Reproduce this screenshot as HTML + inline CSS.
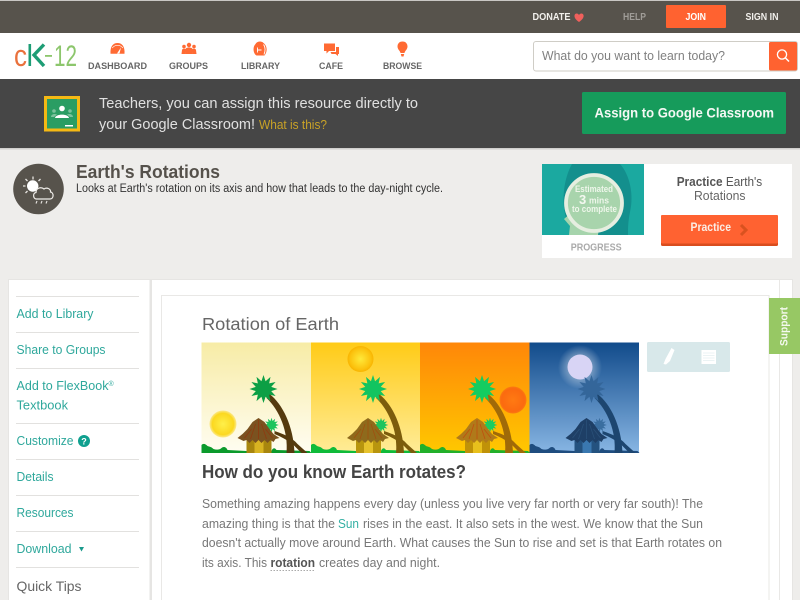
<!DOCTYPE html>
<html><head><meta charset="utf-8"><title>Earth's Rotations</title>
<style>
html,body{margin:0;padding:0;width:800px;height:600px;overflow:hidden;background:#eeedeb}
svg{display:block;position:absolute;left:0;top:0;filter:blur(.3px)}
text{font-family:"Liberation Sans",sans-serif}
.nav{font-size:9.5px;font-weight:bold;fill:#666}
.top{font-size:9.8px;font-weight:bold}
.side{font-size:12.5px;fill:#2fa89c}
.p{font-size:13px;fill:#777}
</style></head><body>
<svg width="800" height="600" viewBox="0 0 800 600" xmlns="http://www.w3.org/2000/svg">
<defs>
<linearGradient id="g1" x1="0" y1="0" x2="0" y2="1"><stop offset="0" stop-color="#f7eca6"/><stop offset="1" stop-color="#fffdf2"/></linearGradient>
<linearGradient id="g2" x1="0" y1="0" x2="0" y2="1"><stop offset="0" stop-color="#ffcb17"/><stop offset="1" stop-color="#ffec98"/></linearGradient>
<linearGradient id="g3" x1="0" y1="0" x2="0" y2="1"><stop offset="0" stop-color="#ff8708"/><stop offset="1" stop-color="#ffc800"/></linearGradient>
<linearGradient id="g4" x1="0" y1="0" x2="0" y2="1"><stop offset="0" stop-color="#114b8b"/><stop offset="1" stop-color="#88b6e4"/></linearGradient>
<radialGradient id="s1"><stop offset="0" stop-color="#fff04a"/><stop offset=".8" stop-color="#fbd820"/><stop offset="1" stop-color="#fbe264" stop-opacity=".7"/></radialGradient>
<radialGradient id="s2"><stop offset="0" stop-color="#ffe93a"/><stop offset=".8" stop-color="#fcc20e"/><stop offset="1" stop-color="#f8b400"/></radialGradient>
<radialGradient id="s3"><stop offset="0" stop-color="#ff7a12"/><stop offset=".85" stop-color="#fb6a10"/><stop offset="1" stop-color="#fb7a10"/></radialGradient>
<radialGradient id="halo"><stop offset=".45" stop-color="#fff" stop-opacity=".4"/><stop offset="1" stop-color="#fff" stop-opacity="0"/></radialGradient>
<polygon id="star" points="0,-14 2.07,-7.73 7,-12.1 5.66,-5.66 12.1,-7 7.73,-2.07 14,0 7.73,2.07 12.1,7 5.66,5.66 7,12.1 2.07,7.73 0,14 -2.07,7.73 -7,12.1 -5.66,5.66 -12.1,7 -7.73,2.07 -14,0 -7.73,-2.07 -12.1,-7 -5.66,-5.66 -7,-12.1 -2.07,-7.73"/>
<g id="scene">
<path d="M0 109V101C2 99 4 100 6 102 9 103 10 103 12 105 15 106 18 106 20 104 22 102 25 103 26 106L45 107 70 107C71 104 73 103 75 106L108 107 110 109Z" fill="var(--gr)"/>
<use href="#star" transform="translate(70 81) scale(.52)" fill="var(--st2)"/>
<path d="M73 87C82 90 90 93 96 100L106 109 100 109 92 101C86 96 80 93 73 90Z" fill="var(--tr)"/>
<path d="M68 50C81 60 92 82 93 109L85 109C87 88 78 66 65 54Z" fill="var(--tr)"/>
<use href="#star" transform="translate(62 45)" fill="var(--st)"/>
<rect x="45" y="92" width="25" height="17" fill="var(--wl)"/>
<rect x="53" y="96" width="9" height="13" fill="var(--dr)"/>
<path d="M57 74L63 78 68 85 72 90 78 94 74 95 72 98 69 96 66 99 63 96 60 99 57 96 54 99 51 96 48 99 45 96 42 97 36 94 41 90 46 85 51 78Z" fill="var(--rf)"/>
<path d="M57 76V95M54 80L49 95M60 80L65 95M50 85L43 94M64 85L71 94" stroke="var(--rs)" stroke-width=".8" fill="none"/>
</g>
</defs>

<!-- top bar -->
<rect width="800" height="33" fill="#57534c"/>
<rect width="800" height="1" fill="#c9c7c4"/>
<text class="top" x="532.500" y="20" fill="#f2f0ec" textLength="38" lengthAdjust="spacingAndGlyphs">DONATE</text>
<path d="M579 22C575.500 19.500 574.300 17.500 574.500 15.500 574.800 13.200 577.800 12.700 579 15 580.200 12.700 583.300 13.200 583.600 15.500 583.800 17.500 582.500 19.500 579 22Z" fill="#f0605c"/>
<text class="top" x="623" y="20" fill="#a09d98" textLength="23" lengthAdjust="spacingAndGlyphs">HELP</text>
<rect x="666" y="5" width="60" height="23" rx="1" fill="#ff6230"/>
<text class="top" x="685.500" y="20" fill="#fff" textLength="20.500" lengthAdjust="spacingAndGlyphs">JOIN</text>
<text class="top" x="745.500" y="20" fill="#f2f0ec" textLength="33" lengthAdjust="spacingAndGlyphs">SIGN IN</text>

<!-- nav -->
<rect y="33" width="800" height="46" fill="#fff"/>
<text x="14" y="66" font-size="31" fill="#e9713c" textLength="13" lengthAdjust="spacingAndGlyphs">c</text>
<path d="M29.800 44V66" fill="none" stroke="#1d9d75" stroke-width="2.600"/>
<path d="M44 44.500L34 55 44 66" fill="none" stroke="#1d9d75" stroke-width="3.400"/>
<rect x="45" y="55" width="7" height="1.800" fill="#8cc66c"/>
<text x="54" y="66" font-size="30" fill="#8cc66c" textLength="23" lengthAdjust="spacingAndGlyphs">12</text>
<!-- dashboard -->
<path d="M110.500 53.800C110 46.500 113 43 117.500 43 122 43 125 46.500 124.500 53.800Z" fill="#ff6a33"/>
<path d="M117 53.500L121 47.500 119.500 53.500Z" fill="#fff"/>
<path d="M112.300 48A6.500 6.500 0 0 1 122.800 48" fill="none" stroke="#fff" stroke-width=".7"/>
<!-- groups -->
<g fill="#ff6a33"><circle cx="189" cy="45" r="2.200"/><path d="M185 54L185.500 49C186 47 192 47 192.500 49L193 54Z"/><circle cx="184" cy="46.500" r="1.800"/><path d="M181.500 54L182 50C182.500 48 185.500 48 186 50L185 54Z"/><circle cx="194" cy="46.500" r="1.800"/><path d="M196.500 54L196 50C195.500 48 192.500 48 192 50L193 54Z"/></g>
<!-- library -->
<path d="M256.500 55.500C253 53.500 252.500 47 255.500 44 257 41.500 261 40.500 263.500 43 267.500 46 267.500 52 264.500 55.500Z" fill="#ff6a33"/>
<path d="M257 50H261.500M257.500 47.500V52.500M263.500 44.500C265.500 47 265.500 51 264 54.500" fill="none" stroke="#fff" stroke-width=".9"/>
<!-- cafe -->
<path d="M324 43.500H335V51H329L326.500 53.500V51H324Z" fill="#ff6a33"/>
<path d="M336 47H339V54H338V56L335.500 54H331.500L330.500 52H336Z" fill="#ff6a33"/>
<!-- browse -->
<path d="M402.500 41.500C406 41.500 407.500 44 407.500 46.500 407.500 49.500 405 50.500 404.500 53H400.500C400 50.500 397.500 49.500 397.500 46.500 397.500 44 399 41.500 402.500 41.500Z" fill="#ff6a33"/>
<path d="M400.800 54H404.200L403.500 56.500H401.500Z" fill="#ff6a33"/>
<text class="nav" x="88" y="69" textLength="59" lengthAdjust="spacingAndGlyphs">DASHBOARD</text>
<text class="nav" x="169" y="69" textLength="39" lengthAdjust="spacingAndGlyphs">GROUPS</text>
<text class="nav" x="241" y="69" textLength="39" lengthAdjust="spacingAndGlyphs">LIBRARY</text>
<text class="nav" x="319" y="69" textLength="24" lengthAdjust="spacingAndGlyphs">CAFE</text>
<text class="nav" x="383" y="69" textLength="39" lengthAdjust="spacingAndGlyphs">BROWSE</text>

<!-- search -->
<rect x="533.500" y="41.500" width="264" height="29.500" rx="2.500" fill="#fff" stroke="#cfcdc6"/>
<rect x="769" y="42" width="28" height="28.500" rx="1.500" fill="#ff6230"/>
<circle cx="782" cy="54.500" r="4.600" fill="none" stroke="#fff" stroke-width="1.300"/>
<path d="M785.500 58L789 61.500" stroke="#fff" stroke-width="1.500"/>
<text x="542" y="60" font-size="13" fill="#808080" textLength="183" lengthAdjust="spacingAndGlyphs">What do you want to learn today?</text>

<!-- classroom banner -->
<rect y="79" width="800" height="69" fill="#464646"/>
<rect y="148" width="800" height="1.500" fill="#d0cfcd"/>
<rect x="44" y="96" width="36" height="35.500" fill="#f5b914"/>
<rect x="47" y="99" width="30" height="29.500" fill="#2a9d63"/>
<g fill="#fff"><circle cx="62" cy="108.500" r="2.800"/><path d="M55 118C55.500 113.500 68.500 113.500 69 118Z"/><rect x="65" y="125" width="8" height="1.500"/></g>
<g fill="#7cc29c"><circle cx="54" cy="111" r="1.800"/><circle cx="70" cy="111" r="1.800"/><path d="M51 117C51 114 55 113.500 57 114.500L54 117ZM73 117C73 114 69 113.500 67 114.500L70 117Z"/></g>
<text x="99" y="108" font-size="14.500" fill="#e0e0e0" textLength="319" lengthAdjust="spacingAndGlyphs">Teachers, you can assign this resource directly to</text>
<text x="99" y="129" font-size="14.500" fill="#e0e0e0" textLength="156" lengthAdjust="spacingAndGlyphs">your Google Classroom!</text>
<text x="259" y="129" font-size="12.500" fill="#c9a227" textLength="68" lengthAdjust="spacingAndGlyphs">What is this?</text>
<rect x="582" y="92" width="204" height="42" rx="1.500" fill="#169b5b"/>
<text x="594.500" y="117.500" font-size="13.800" font-weight="bold" fill="#f4f8f4" textLength="179.500" lengthAdjust="spacingAndGlyphs">Assign to Google Classroom</text>

<!-- title -->
<circle cx="38.500" cy="189" r="25.300" fill="#57534c"/>
<circle cx="32.700" cy="186" r="5.700" fill="#fff"/>
<path d="M33 176.500V179.500M25.500 179L27.500 181M40.500 179L38.500 181M23 186H25.500M25.500 193L27.500 191" stroke="#e6e4e0" stroke-width="1.300" fill="none"/>
<path d="M36.500 199C33 199 32.500 193 36 192.500 36 188 41 186.500 44 189 47 187 51 189 50.500 192 54 192.500 54 199 50 199Z" fill="#57534c" stroke="#f0eeea" stroke-width="1.200"/>
<path d="M36 203.500L37 201M41 203.500L42 201M46 203.500L47 201" stroke="#e6e4e0" stroke-width="1.100"/>
<text x="76" y="178" font-size="18" font-weight="bold" fill="#55514b" textLength="144" lengthAdjust="spacingAndGlyphs">Earth's Rotations</text>
<text x="76" y="192" font-size="11.500" fill="#333" textLength="367" lengthAdjust="spacingAndGlyphs">Looks at Earth's rotation on its axis and how that leads to the day-night cycle.</text>

<!-- practice card -->
<rect x="542" y="164" width="250" height="94" fill="#fff"/>
<rect x="542" y="164" width="102" height="71" fill="#1ba9a0"/>
<path d="M566 218C561 200 564 178 572 164H620C630 175 634 195 630 212 628 222 628 228 628 235H597L566 218Z" fill="#138f8d"/>
<path d="M569 235L570 226 564 219 572 212 600 222 598 235Z" fill="#a6d4ac"/>
<circle cx="594" cy="203" r="28" fill="#a8d4ac" stroke="#e6eee0" stroke-width="3.800"/>
<text x="575" y="192" font-size="9" font-weight="bold" fill="#eef6ea" textLength="38" lengthAdjust="spacingAndGlyphs">Estimated</text>
<text x="579" y="204" font-size="13" font-weight="bold" fill="#f4f8f0">3</text>
<text x="589" y="203.500" font-size="9.500" font-weight="bold" fill="#eef6ea" textLength="20" lengthAdjust="spacingAndGlyphs">mins</text>
<text x="572" y="212" font-size="9" font-weight="bold" fill="#eef6ea" textLength="45" lengthAdjust="spacingAndGlyphs">to complete</text>
<text x="570.700" y="250.500" font-size="10.500" font-weight="bold" fill="#aaa" textLength="51" lengthAdjust="spacingAndGlyphs">PROGRESS</text>
<text x="676.700" y="186" font-size="13" fill="#555" textLength="85.500" lengthAdjust="spacingAndGlyphs"><tspan font-weight="bold">Practice</tspan> Earth's</text>
<text x="694" y="200" font-size="13" fill="#666" textLength="51.500" lengthAdjust="spacingAndGlyphs">Rotations</text>
<rect x="661" y="215" width="117" height="31" rx="1.500" fill="#d94d1e"/>
<rect x="661" y="215" width="117" height="28.500" rx="1.500" fill="#ff6231"/>
<text x="690.500" y="231" font-size="12" font-weight="bold" fill="#fbeee6" textLength="40.500" lengthAdjust="spacingAndGlyphs">Practice</text>
<path d="M741 225L746 230 741 235" fill="none" stroke="#d9521f" stroke-width="3"/>

<!-- panels -->
<rect x="8" y="279" width="785" height="321" fill="#e6e5e3"/>
<rect x="9" y="280" width="140.500" height="320" fill="#fff"/>
<rect x="152" y="280" width="640" height="320" fill="#fff"/>
<rect x="161.500" y="295.500" width="607.500" height="310" fill="#fff" stroke="#e9e8e6"/>
<rect x="779" y="280" width="1" height="320" fill="#e9e8e6"/>

<!-- sidebar -->
<g fill="#e2e1df">
<rect x="16" y="296" width="123" height="1"/><rect x="16" y="332" width="123" height="1"/><rect x="16" y="368" width="123" height="1"/><rect x="16" y="423" width="123" height="1"/><rect x="16" y="459" width="123" height="1"/><rect x="16" y="495" width="123" height="1"/><rect x="16" y="531" width="123" height="1"/><rect x="16" y="567" width="123" height="1"/>
</g>
<text class="side" x="16.500" y="318" textLength="77" lengthAdjust="spacingAndGlyphs">Add to Library</text>
<text class="side" x="16.500" y="354" textLength="89" lengthAdjust="spacingAndGlyphs">Share to Groups</text>
<text class="side" x="16.500" y="390" textLength="92" lengthAdjust="spacingAndGlyphs">Add to FlexBook</text>
<text x="108.500" y="386" font-size="7" fill="#2fa89c">®</text>
<text class="side" x="16.500" y="409.500" textLength="51.500" lengthAdjust="spacingAndGlyphs">Textbook</text>
<text class="side" x="16.500" y="445" textLength="57" lengthAdjust="spacingAndGlyphs">Customize</text>
<circle cx="84" cy="441" r="6" fill="#0fa08f"/>
<text x="84" y="444.500" font-size="9" font-weight="bold" fill="#fff" text-anchor="middle">?</text>
<text class="side" x="16.500" y="481" textLength="37" lengthAdjust="spacingAndGlyphs">Details</text>
<text class="side" x="16.500" y="517" textLength="57" lengthAdjust="spacingAndGlyphs">Resources</text>
<text class="side" x="16.500" y="553" textLength="55" lengthAdjust="spacingAndGlyphs">Download</text>
<path d="M79 547H84L81.500 551.500Z" fill="#1a9a8c"/>
<text x="16.500" y="591" font-size="14" fill="#666" textLength="65" lengthAdjust="spacingAndGlyphs">Quick Tips</text>

<!-- article -->
<text x="202" y="330" font-size="17.500" fill="#666" textLength="137" lengthAdjust="spacingAndGlyphs">Rotation of Earth</text>

<!-- image -->
<rect x="201.500" y="342.500" width="110" height="110.500" fill="url(#g1)"/>
<rect x="311" y="342.500" width="110" height="110.500" fill="url(#g2)"/>
<rect x="420" y="342.500" width="110" height="110.500" fill="url(#g3)"/>
<rect x="529.500" y="342.500" width="109.500" height="110.500" fill="url(#g4)"/>
<circle cx="223" cy="424" r="13.500" fill="url(#s1)"/>
<circle cx="360.500" cy="359" r="13" fill="url(#s2)"/>
<circle cx="513" cy="400" r="13.500" fill="url(#s3)"/>
<circle cx="580" cy="367" r="22" fill="url(#halo)"/>
<circle cx="580" cy="367" r="12.500" fill="#d8d4f5"/>
<g transform="translate(201.500 344)" style="--gr:#0b9a2c;--st:#0c9f45;--st2:#1dc45e;--tr:#553a0e;--wl:#a8860e;--dr:#d8b422;--rf:#7a5220;--rs:#8f3a10"><use href="#scene"/></g>
<g transform="translate(311 344)" style="--gr:#0fbb3a;--st:#12c460;--st2:#1dc45e;--tr:#7c5c0c;--wl:#b8950e;--dr:#e6c22c;--rf:#8e6a1c;--rs:#a0500f"><use href="#scene"/></g>
<g transform="translate(420 344)" style="--gr:#22b02a;--st:#14cc60;--st2:#1dcc60;--tr:#a06a08;--wl:#c09208;--dr:#e8c01c;--rf:#b07a1a;--rs:#c0500f"><use href="#scene"/></g>
<g transform="translate(529.500 344)" style="--gr:#1f4d7f;--st:#34669a;--st2:#3a6ea0;--tr:#1d4670;--wl:#24527f;--dr:#3a78b0;--rf:#1e3f66;--rs:#2a5078"><use href="#scene"/></g>

<!-- tools -->
<rect x="647" y="342" width="83" height="30" rx="1.500" fill="#d8e8ea"/>
<path d="M671.500 348L674.500 350 670 361 666 364.500 663.500 364 665.500 359Z" fill="#fff"/>
<rect x="701.500" y="350" width="14.500" height="14" fill="#fff"/>
<path d="M703 353H714.500M703 355.500H714.500M703 358H714.500M703 360.500H714.500" stroke="#d8e8ea" stroke-width=".6"/>

<!-- heading + body -->
<text x="202" y="478" font-size="18" font-weight="bold" fill="#444" textLength="264" lengthAdjust="spacingAndGlyphs">How do you know Earth rotates?</text>
<text class="p" x="202" y="508" textLength="501" lengthAdjust="spacingAndGlyphs">Something amazing happens every day (unless you live very far north or very far south)! The</text>
<text class="p" x="202" y="528" textLength="133" lengthAdjust="spacingAndGlyphs">amazing thing is that the</text>
<text x="338" y="528" font-size="13" fill="#35b0a4" textLength="21" lengthAdjust="spacingAndGlyphs">Sun</text>
<text class="p" x="363" y="528" textLength="340" lengthAdjust="spacingAndGlyphs">rises in the east. It also sets in the west. We know that the Sun</text>
<text class="p" x="202" y="547" textLength="520" lengthAdjust="spacingAndGlyphs">doesn't actually move around Earth. What causes the Sun to rise and set is that Earth rotates on</text>
<text class="p" x="202" y="567" textLength="65" lengthAdjust="spacingAndGlyphs">its axis. This</text>
<text x="270.500" y="567" font-size="13" font-weight="bold" fill="#555" textLength="44.500" lengthAdjust="spacingAndGlyphs">rotation</text>
<path d="M270.500 570.500H315" stroke="#aaa" stroke-width="1" stroke-dasharray="1.500 1.500"/>
<text class="p" x="319" y="567" textLength="121" lengthAdjust="spacingAndGlyphs">creates day and night.</text>

<!-- support -->
<rect x="769" y="298" width="31" height="56" fill="#97c864"/>
<text transform="translate(787.500 346) rotate(-90)" font-size="11" font-weight="bold" fill="#f4f9ee" textLength="39" lengthAdjust="spacingAndGlyphs">Support</text>
</svg>
</body></html>
